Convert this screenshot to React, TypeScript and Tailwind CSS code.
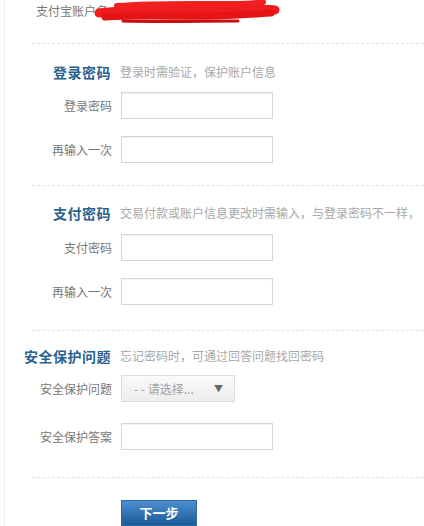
import React from "react";

const font = { fontFamily: '"Noto Sans CJK SC", "Noto Sans", sans-serif' };

function Dashed({ className = "" }: { className?: string }) {
  return <div className={`ml-[27px] border-t border-dashed border-[#e2e2e2] ${className}`} />;
}

function Heading({ title, desc, className = "" }: { title: string; desc: string; className?: string }) {
  return (
    <div className={`flex items-center whitespace-nowrap ${className}`}>
      <div className="w-[106px] shrink-0 text-right text-[14px] font-bold leading-[20px] tracking-[0.5px] text-[#28628f]">
        {title}
      </div>
      <div className="ml-[9px] text-[12px] leading-[20px] text-[#a8a8a8]">{desc}</div>
    </div>
  );
}

function Field({ label, className = "", children }: { label: string; className?: string; children?: React.ReactNode }) {
  return (
    <div className={`flex items-center ${className}`}>
      <div className="w-[107px] shrink-0 text-right text-[12px] leading-[27px] text-[#777]">{label}</div>
      <div className="ml-[9px]">
        {children ?? (
          <div className="h-[27px] w-[152px] border border-[#d6d6d6] bg-white shadow-[inset_0_1px_1px_rgba(0,0,0,0.06)]" />
        )}
      </div>
    </div>
  );
}

export default function App() {
  return (
    <div className="h-[526px] w-[424px] overflow-hidden bg-white" style={font}>
      <div className="ml-[4px] flex h-full flex-col border-l border-[#ececec]">
        <div className="relative flex h-[26px] items-center">
          <div className="w-[103px] text-right text-[12px] text-[#777]">支付宝账户名</div>
          {/* redaction scribble */}
          <svg
            className="absolute left-[88px] top-0"
            width="190"
            height="26"
            viewBox="0 0 190 26"
            aria-hidden
          >
            <path
              d="M6 13 C40 9 80 11 110 10 C135 9 160 8 182 10"
              stroke="#ee1c1c"
              strokeWidth="9"
              fill="none"
              strokeLinecap="round"
            />
            <path
              d="M12 17 C50 15 90 17 125 16 C150 15 165 14 178 13"
              stroke="#e41414"
              strokeWidth="7"
              fill="none"
              strokeLinecap="round"
            />
            <path
              d="M24 6 C60 3 100 4 140 4 C155 4 165 3 170 2"
              stroke="#f02020"
              strokeWidth="6"
              fill="none"
              strokeLinecap="round"
            />
            <path
              d="M30 21 C70 22 110 21 145 21"
              stroke="#c80e0e"
              strokeWidth="3"
              fill="none"
              strokeLinecap="round"
            />
          </svg>
        </div>

        <Dashed className="mt-[22px]" />
        <Heading className="mt-[18px]" title="登录密码" desc="登录时需验证，保护账户信息" />
        <Field className="mt-[10px]" label="登录密码" />
        <Field className="mt-[17px]" label="再输入一次" />

        <Dashed className="mt-[22px]" />
        <Heading className="mt-[17px]" title="支付密码" desc="交易付款或账户信息更改时需输入，与登录密码不一样，" />
        <Field className="mt-[11px]" label="支付密码" />
        <Field className="mt-[17px]" label="再输入一次" />

        <Dashed className="mt-[25px]" />
        <Heading className="mt-[15px]" title="安全保护问题" desc="忘记密码时，可通过回答问题找回密码" />
        <Field className="mt-[9px]" label="安全保护问题">
          <div className="flex h-[27px] w-[114px] items-center justify-between border border-[#dcdcdc] bg-gradient-to-b from-[#fafafa] to-[#ededed] pl-[12px] pr-[11px] text-[12px] text-[#a0a0a0]">
            <span>- - 请选择...</span>
            <span className="text-[9px] text-[#666]">▼</span>
          </div>
        </Field>
        <Field className="mt-[21px]" label="安全保护答案" />

        <Dashed className="mt-[27px]" />
        <div className="ml-[116px] mt-[22px]">
          <button
            type="button"
            className="flex h-[26px] w-[76px] items-center justify-center border border-[#2a6aa6] bg-gradient-to-b from-[#4c8fd0] to-[#1b5b98] text-[13px] font-bold text-white"
          >
            下一步
          </button>
        </div>
      </div>
    </div>
  );
}
